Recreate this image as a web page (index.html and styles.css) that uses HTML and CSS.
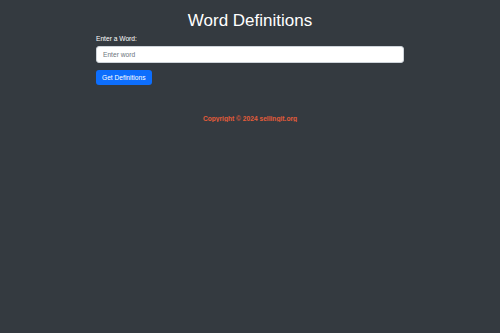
FILE: index.html
```html
<!DOCTYPE html>
<html lang="en">
<head>
    <meta charset="UTF-8">
    <meta name="viewport" content="width=device-width, initial-scale=1.0">
    <title>Word Definitions</title>
    <link rel="stylesheet" href="styles.css">
</head>
<body>
    <div class="container">
        <h1>Word Definitions</h1>

        <form class="word-form">
            <label for="wordInput">Enter a Word:</label>
            <input type="text" id="wordInput" placeholder="Enter word">
            <button type="button" class="btn">Get Definitions</button>
        </form>

        <div id="results"></div>
    </div>

    <footer class="footer">
        <p>Copyright &copy; 2024 sellingit.org</p>
    </footer>
</body>
</html>
```

FILE: styles.css
```css
body {
margin: 0;
background-color: #343a40;
color: white;
font-family: "Liberation Sans", Arial, sans-serif;
}

.container {
width: 308px;
margin: 0 auto;
}

h1 {
font-size: 17px;
font-weight: normal;
text-align: center;
margin: 0;
padding-top: 11px;
line-height: 20px;
}

.word-form {
display: flex;
flex-direction: column;
align-items: flex-start;
margin-top: 3px;
}

.word-form label {
font-size: 6.65px;
line-height: 9px;
margin-bottom: 3px;
}

.word-form input {
box-sizing: border-box;
width: 100%;
height: 17px;
border: 1px solid #ced4da;
border-radius: 3px;
padding: 0 6px;
font-family: inherit;
font-size: 6.65px;
}

.word-form input::placeholder {
color: #6c757d;
}

.btn {
margin-top: 7px;
height: 15px;
padding: 0 6px;
background-color: #0d6efd;
color: white;
border: none;
border-radius: 3px;
font-family: inherit;
font-size: 6.65px;
}

.footer {
text-align: center;
margin-top: 30px;
}

.footer p {
margin: 0;
color: #e45c3a;
font-size: 6.65px;
font-weight: bold;
}
```
